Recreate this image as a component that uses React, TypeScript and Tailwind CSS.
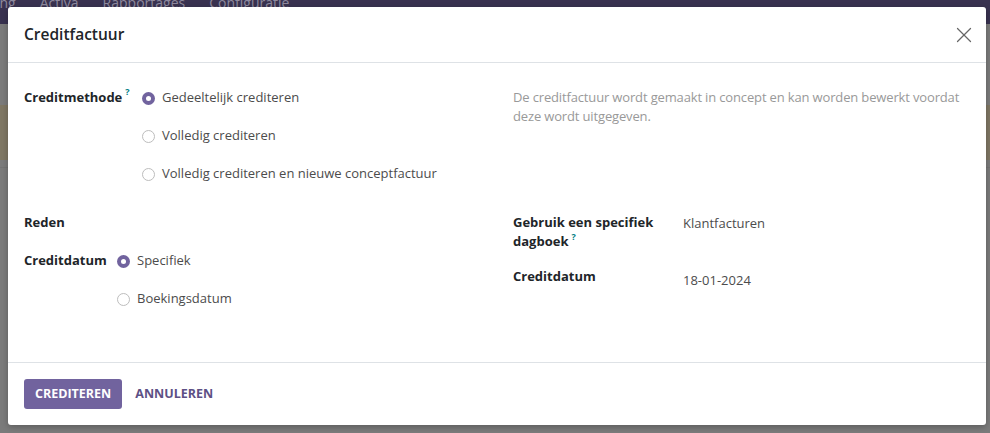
import { X } from 'lucide-react';

// Odoo-style "Creditfactuur" wizard, dialog laid over a dimmed backend page

function Radio({ checked, label }: { checked?: boolean; label: string }) {
    return (
        <div className="flex items-center gap-[7px]">
            {checked ? (
                <span className="w-[13px] h-[13px] rounded-full bg-[#71639e] flex items-center justify-center">
                    <span className="w-[5px] h-[5px] rounded-full bg-white" />
                </span>
            ) : (
                <span className="w-[13px] h-[13px] rounded-full border border-[#bdbdbd] bg-white" />
            )}
            <span className="text-[#4c4c4c]">{label}</span>
        </div>
    );
}

function Help() {
    return <sup className="text-[#017e84] text-[9px] font-bold ml-[3px] -top-[6px]">?</sup>;
}

function Backdrop() {
    return (
        <div className="absolute inset-0 flex flex-col">
            <div className="h-[24px] bg-[#393250] flex items-start gap-[24px] text-[14px] text-[#8f8a9e] leading-none overflow-hidden">
                <span className="-mt-[4px] -ml-[4px]">ing</span>
                <span className="-mt-[4px]">Activa</span>
                <span className="-mt-[4px]">Rapportages</span>
                <span className="-mt-[4px]">Configuratie</span>
            </div>
            <div className="flex-1 bg-[#7b7b7b] flex flex-col">
                <div className="h-[81px]" />
                <div className="h-[55px] bg-[#7f7764]" />
                <div className="h-[8px] border-b border-[#747474]" />
            </div>
        </div>
    );
}

export default function App() {
    return (
        <div
            className="relative w-[990px] h-[433px] overflow-hidden bg-[#7b7b7b] text-[13px] text-[#212529]"
            style={{ fontFamily: '"Open Sans", "Liberation Sans", sans-serif' }}
        >
            <Backdrop />

            <div className="absolute left-[8px] top-[7px] w-[978px] bg-white rounded-[3px] shadow-[0_2px_6px_rgba(0,0,0,0.25)] flex flex-col">
                {/* Header */}
                <div className="h-[56px] px-4 flex items-center justify-between border-b border-[#dee2e6]">
                    <h4 className="text-[15.5px] font-semibold text-[#212529]">Creditfactuur</h4>
                    <X size={26} strokeWidth={1.15} className="text-[#666] -mr-[7px]" />
                </div>

                {/* Body */}
                <div className="h-[299px] px-4 pt-4 grid grid-cols-2 gap-x-8">
                    <div className="flex flex-col">
                        <div className="grid grid-cols-[118px_1fr]">
                            <div className="h-[38px] flex items-center font-bold">Creditmethode<Help /></div>
                            <div className="h-[38px] flex items-center"><Radio checked label="Gedeeltelijk crediteren" /></div>
                            <div />
                            <div className="h-[38px] flex items-center"><Radio label="Volledig crediteren" /></div>
                            <div />
                            <div className="h-[38px] flex items-center"><Radio label="Volledig crediteren en nieuwe conceptfactuur" /></div>
                        </div>
                        <div className="grid grid-cols-[93px_1fr] mt-[11px]">
                            <div className="h-[38px] flex items-center font-bold">Reden</div>
                            <div />
                            <div className="h-[38px] flex items-center font-bold">Creditdatum</div>
                            <div className="h-[38px] flex items-center"><Radio checked label="Specifiek" /></div>
                            <div />
                            <div className="h-[38px] flex items-center"><Radio label="Boekingsdatum" /></div>
                        </div>
                    </div>

                    <div className="flex flex-col">
                        <p className="text-[#999] leading-[19px] pt-[9px] tracking-[-0.15px]">
                            De creditfactuur wordt gemaakt in concept en kan worden bewerkt voordat deze wordt uitgegeven.
                        </p>
                        <div className="grid grid-cols-[170px_1fr] mt-[87px] gap-y-[16px]">
                            <div className="font-bold leading-[19px] pr-4">Gebruik een specifiek dagboek<Help /></div>
                            <div className="text-[#4c4c4c] leading-[19px] pt-[1px]">Klantfacturen</div>
                            <div className="font-bold leading-[19px]">Creditdatum</div>
                            <div className="text-[#4c4c4c] leading-[19px] pt-[4px]">18-01-2024</div>
                        </div>
                    </div>
                </div>

                {/* Footer */}
                <div className="border-t border-[#dee2e6] px-4 pt-4 pb-4 flex items-center gap-[13px] text-[12.5px]">
                    <button className="h-[30px] px-[11px] rounded-[3px] bg-[#71639e] text-white font-bold uppercase">Crediteren</button>
                    <button className="h-[30px] text-[#5d5085] font-bold uppercase">Annuleren</button>
                </div>
            </div>
        </div>
    );
}
